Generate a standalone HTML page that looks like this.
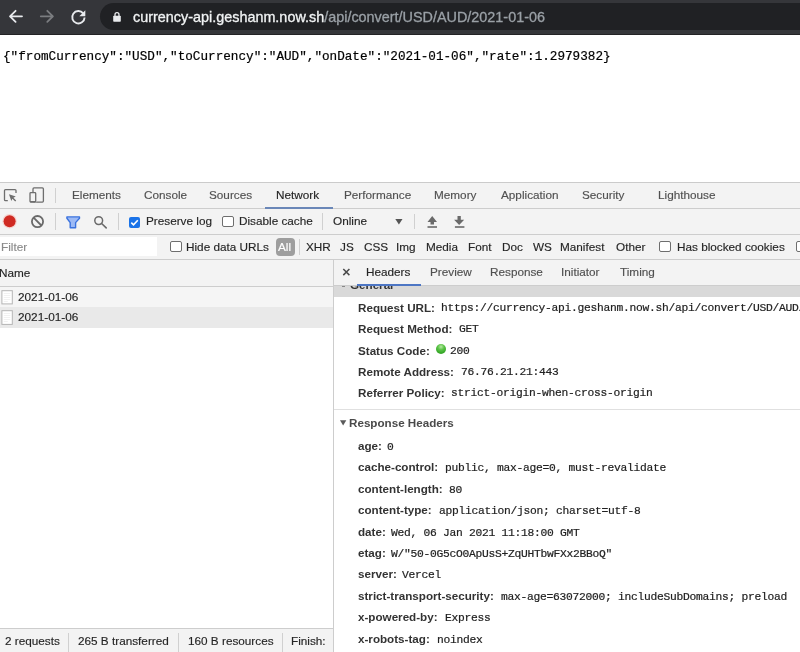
<!DOCTYPE html>
<html><head><meta charset="utf-8">
<style>
*{margin:0;padding:0;box-sizing:border-box}
html,body{width:800px;height:652px;overflow:hidden;background:#fff;font-family:"Liberation Sans",sans-serif}
.a{position:absolute;white-space:nowrap;will-change:transform}
#tb{position:absolute;left:0;top:0;width:800px;height:35px;background:#35363a;border-bottom:1px solid #232325}
#pill{position:absolute;left:100px;top:3px;width:720px;height:27px;border-radius:13.5px;background:#202124}
#url{left:133px;top:8px;font-size:14.4px;color:#f1f3f4;line-height:18px;-webkit-text-stroke:0.3px #f1f3f4}
#url span{color:#9aa0a6;-webkit-text-stroke:0.3px #9aa0a6}
#json{left:3px;top:49px;font-family:"Liberation Mono",monospace;font-size:12.66px;color:#000;line-height:16px;-webkit-text-stroke:0.2px #000}
#dt{position:absolute;left:0;top:182px;width:800px;height:470px;background:#fff;border-top:1px solid #cbcbcb}
.bar{position:absolute;left:0;width:800px;background:#f3f3f3;border-bottom:1px solid #cdcdcd}
.t{font-size:11.75px;color:#262626;line-height:14px;-webkit-text-stroke:0.15px currentColor}
.g{color:#505050}
.sep{position:absolute;width:1px;background:#d0d0d0}
.cb{position:absolute;width:12px;height:11px;border:1px solid #6e6e6e;border-radius:2px;background:#fff}
.k{font-size:11.65px;font-weight:bold;color:#333;line-height:14px}
.v{font-family:"Liberation Mono",monospace;font-size:11.3px;letter-spacing:-0.28px;font-weight:normal;color:#222;line-height:14px;-webkit-text-stroke:0.2px #222}
</style></head><body>
<div id="tb"></div>
<div id="pill"></div>
<!-- back -->
<svg class="a" style="left:0;top:0" width="100" height="35" viewBox="0 0 100 35">
 <g fill="none" stroke="#e8eaed" stroke-width="1.8" stroke-linecap="round" stroke-linejoin="round">
  <path d="M22 16.3H10.3M15.6 10.8L10 16.3l5.6 5.6"/>
 </g>
 <g fill="none" stroke="#7b7d80" stroke-width="1.8" stroke-linecap="round" stroke-linejoin="round">
  <path d="M40.8 16.3h11.8M47.3 10.8l5.6 5.5-5.6 5.6"/>
 </g>
 <path d="M83.2 13.3A6.2 6.2 0 1 0 84.6 17.5" fill="none" stroke="#e8eaed" stroke-width="1.9"/>
 <path d="M85.3 10.3v6h-6z" fill="#e8eaed"/>
</svg>
<svg class="a" style="left:112px;top:11px" width="10" height="12" viewBox="0 0 10 12">
 <path d="M3 5V3.7a2 2 0 0 1 4 0V5" fill="none" stroke="#e8eaed" stroke-width="1.3"/>
 <rect x="1.2" y="4.7" width="7.6" height="6" rx="0.8" fill="#e8eaed"/>
</svg>
<div class="a" id="url">currency-api.geshanm.now.sh<span>/api/convert/USD/AUD/2021-01-06</span></div>
<div class="a" id="json">{"fromCurrency":"USD","toCurrency":"AUD","onDate":"2021-01-06","rate":1.2979382}</div>

<div id="dt"></div>

<div class="bar" style="top:183px;height:26px"></div>
<div class="bar" style="top:209px;height:26px"></div>
<div class="bar" style="top:235px;height:25px"></div>
<div class="a" style="left:0;top:237px;width:157px;height:19px;background:#fff"></div>
<!-- left pane -->
<div class="bar" style="top:260px;width:333px;height:27px"></div>
<div class="a" style="left:0;top:287px;width:333px;height:20px;background:#f5f5f5"></div>
<div class="a" style="left:0;top:307px;width:333px;height:21px;background:#e9e9e9"></div>
<div class="a" style="left:0;top:628px;width:333px;height:24px;background:#f3f3f3;border-top:1px solid #cdcdcd"></div>
<div class="sep" style="left:333px;top:260px;height:392px;background:#cdcdcd"></div>
<!-- right pane -->
<div class="bar" style="left:334px;top:260px;width:466px;height:26px"></div>
<div class="a" style="left:357px;top:284px;width:64px;height:2px;background:#4d76c4"></div>
<div class="a" style="left:334px;top:286px;width:466px;height:11px;background:#d9d9d9;overflow:hidden"></div>
<div class="a" style="left:334px;top:409px;width:466px;height:1px;background:#e0e0e0"></div>
<div class="a" style="left:265px;top:207px;width:68px;height:2px;background:#6a87b8"></div>


<!-- tab bar -->
<div class="a t g" style="left:72px;top:188px">Elements</div>
<div class="a t g" style="left:144px;top:188px">Console</div>
<div class="a t g" style="left:209px;top:188px">Sources</div>
<div class="a t" style="left:276px;top:188px">Network</div>
<div class="a t g" style="left:344px;top:188px">Performance</div>
<div class="a t g" style="left:434px;top:188px">Memory</div>
<div class="a t g" style="left:501px;top:188px">Application</div>
<div class="a t g" style="left:582px;top:188px">Security</div>
<div class="a t g" style="left:658px;top:188px">Lighthouse</div>
<div class="sep" style="left:55px;top:188px;height:15px"></div>
<!-- row2 -->
<div class="sep" style="left:55px;top:213px;height:17px"></div>
<div class="sep" style="left:118px;top:213px;height:17px"></div>
<div class="a" style="left:129px;top:217px;width:11px;height:11px;border-radius:2px;background:#1a73e8"></div>
<svg class="a" style="left:129px;top:217px" width="11" height="11" viewBox="0 0 11 11"><path d="M2.3 5.6l2.2 2.2 4.3-4.6" fill="none" stroke="#fff" stroke-width="1.6"/></svg>
<div class="a t" style="left:146px;top:214px">Preserve log</div>
<div class="cb" style="left:222px;top:216px"></div>
<div class="a t" style="left:239px;top:214px">Disable cache</div>
<div class="sep" style="left:322px;top:213px;height:17px"></div>
<div class="a t" style="left:333px;top:214px">Online</div>
<svg class="a" style="left:395px;top:218.5px" width="8" height="6" viewBox="0 0 8 6"><path d="M0.3 0h7.2L3.9 5.6z" fill="#555"/></svg>
<div class="sep" style="left:414px;top:214px;height:15px"></div>
<!-- row3 -->
<div class="a t" style="left:1px;top:240px;color:#8a8a8a">Filter</div>
<div class="cb" style="left:170px;top:241px"></div>
<div class="a t" style="left:186px;top:240px">Hide data URLs</div>
<div class="a" style="left:276px;top:238px;width:19px;height:18px;border-radius:4px;background:#9e9e9e"></div>
<div class="a t" style="left:278px;top:240px;color:#fff">All</div>
<div class="sep" style="left:299px;top:239px;height:16px"></div>
<div class="a t" style="left:306px;top:240px">XHR</div>
<div class="a t" style="left:340px;top:240px">JS</div>
<div class="a t" style="left:364px;top:240px">CSS</div>
<div class="a t" style="left:396px;top:240px">Img</div>
<div class="a t" style="left:426px;top:240px">Media</div>
<div class="a t" style="left:468px;top:240px">Font</div>
<div class="a t" style="left:502px;top:240px">Doc</div>
<div class="a t" style="left:533px;top:240px">WS</div>
<div class="a t" style="left:560px;top:240px">Manifest</div>
<div class="a t" style="left:616px;top:240px">Other</div>
<div class="cb" style="left:659px;top:241px"></div>
<div class="a t" style="left:677px;top:240px">Has blocked cookies</div>
<div class="cb" style="left:796px;top:241px"></div>
<!-- name list -->
<div class="a t" style="left:-1px;top:266px">Name</div>
<div class="a t" style="left:18px;top:290px;font-size:11.8px">2021-01-06</div>
<div class="a t" style="left:18px;top:310px;font-size:11.8px">2021-01-06</div>
<!-- status -->
<div class="a t" style="left:5px;top:634px">2 requests</div>
<div class="sep" style="left:68px;top:633px;height:19px"></div>
<div class="a t" style="left:78px;top:634px">265 B transferred</div>
<div class="sep" style="left:178px;top:633px;height:19px"></div>
<div class="a t" style="left:188px;top:634px">160 B resources</div>
<div class="sep" style="left:282px;top:633px;height:19px"></div>
<div class="a t" style="left:291px;top:634px">Finish:</div>
<!-- details tabs -->
<svg class="a" style="left:341px;top:267px" width="10" height="10" viewBox="0 0 10 10"><path d="M2.3 2l6.1 6.1M8.4 2L2.3 8.1" stroke="#4a4a4a" stroke-width="1.5"/></svg>
<div class="a t" style="left:366px;top:265px">Headers</div>
<div class="a t g" style="left:430px;top:265px">Preview</div>
<div class="a t g" style="left:490px;top:265px">Response</div>
<div class="a t g" style="left:561px;top:265px">Initiator</div>
<div class="a t g" style="left:620px;top:265px">Timing</div>

<!-- icons -->
<svg class="a" style="left:0;top:183px" width="60" height="26" viewBox="0 183 60 26">
 <path d="M7.8 200.7H5.5a1 1 0 0 1-1-1V190.6a1 1 0 0 1 1-1h9.5a1 1 0 0 1 1 1V193" fill="none" stroke="#6e6e6e" stroke-width="1.3"/>
 <path d="M9 194.2L15.8 196.6L13.4 197.7L16.2 200.6L15.2 201.6L12.4 198.7L11.3 201.1Z" fill="#6e6e6e"/>
 <rect x="33" y="187.9" width="10.4" height="14.2" rx="1" fill="none" stroke="#6e6e6e" stroke-width="1.3"/>
 <rect x="29.3" y="192" width="7.1" height="10.8" rx="1" fill="#f3f3f3"/>
 <rect x="30" y="192.7" width="5.7" height="9.4" rx="0.8" fill="none" stroke="#6e6e6e" stroke-width="1.3"/>
 <rect x="30" y="201" width="5.7" height="1.3" fill="#6e6e6e"/>
</svg>
<svg class="a" style="left:0;top:209px" width="120" height="26" viewBox="0 209 120 26">
 <circle cx="9.6" cy="221.2" r="7.2" fill="#f5c4bf" opacity="0.7"/>
 <circle cx="9.6" cy="221.2" r="6" fill="#cf2a22"/>
 <circle cx="37.5" cy="221.6" r="5.6" fill="none" stroke="#6a6a6a" stroke-width="1.8"/>
 <path d="M33.6 217.7l7.8 7.8" stroke="#6a6a6a" stroke-width="1.8"/>
 <path d="M66.9 216.9h12.6v1.4l-3.9 4.3v5.2h-5.4v-5.2l-3.3-4.3z" fill="#9dbaf5" stroke="#3a72de" stroke-width="1.4" stroke-linejoin="round"/>
 <circle cx="98.7" cy="220.6" r="3.9" fill="none" stroke="#6a6a6a" stroke-width="1.5"/>
 <path d="M101.6 223.5l4.6 4.4" stroke="#6a6a6a" stroke-width="1.6" stroke-linecap="round"/>
</svg>
<svg class="a" style="left:420px;top:209px" width="50" height="26" viewBox="420 209 50 26">
 <path d="M432.2 216l-4.7 6h3v2.6h3.5v-2.6h3z" fill="#6a6a6a"/>
 <rect x="427.5" y="226.2" width="9.5" height="1.6" fill="#6a6a6a"/>
 <path d="M457.5 216h3.3v3.8h3.4l-5.05 5.3-5.05-5.3h3.4z" fill="#6a6a6a"/>
 <rect x="454.9" y="226.2" width="9.5" height="1.6" fill="#6a6a6a"/>
</svg>
<svg class="a" style="left:0;top:287px" width="16" height="41" viewBox="0 287 16 41">
 <rect x="1.9" y="290.7" width="10.4" height="13.2" fill="#fff" stroke="#b4b4b4" stroke-width="1"/>
 <path d="M3.8 293.5h6.5M3.8 295.5h6.5M3.8 297.5h6.5M3.8 299.5h6.5M3.8 301.5h4" stroke="#eeeeee" stroke-width="0.8"/>
 <rect x="1.9" y="310.7" width="10.4" height="13.7" fill="#fff" stroke="#b4b4b4" stroke-width="1"/>
 <path d="M3.8 313.5h6.5M3.8 315.5h6.5M3.8 317.5h6.5M3.8 319.5h6.5M3.8 321.5h4" stroke="#eeeeee" stroke-width="0.8"/>
</svg>
<div class="a" style="left:334px;top:286px;width:466px;height:11px;overflow:hidden"><div class="k" style="position:absolute;left:16px;top:-8.5px">General</div><div style="position:absolute;left:8px;top:0;width:2.5px;height:1px;background:#888"></div></div>
<div class="a k" style="left:358px;top:301px">Request URL:</div>
<div class="a v" style="left:440.55px;top:301px">https://currency-api.geshanm.now.sh/api/convert/USD/AUD/2021-01-06</div>
<div class="a k" style="left:358px;top:322px">Request Method:</div>
<div class="a v" style="left:459.30px;top:322px">GET</div>
<div class="a k" style="left:358px;top:344px">Status Code:</div>
<div class="a v" style="left:450.30px;top:344px">200</div>
<div class="a k" style="left:358px;top:365px">Remote Address:</div>
<div class="a v" style="left:460.55px;top:365px">76.76.21.21:443</div>
<div class="a k" style="left:358px;top:386px">Referrer Policy:</div>
<div class="a v" style="left:450.55px;top:386px">strict-origin-when-cross-origin</div>
<div class="a" style="left:436px;top:344px;width:10px;height:10px;border-radius:5px;background:radial-gradient(circle at 50% 28%,#b8e8a4 0,#5cc448 35%,#36a828 70%,#2e9422 100%)"></div>
<svg class="a" style="left:340px;top:420px" width="7" height="6" viewBox="0 0 7 6"><path d="M0 0.3h6.3L3.15 5.6z" fill="#5a5a5a"/></svg>
<div class="a k" style="left:349px;top:416px;color:#4a4a4a">Response Headers</div>
<div class="a k" style="left:358px;top:439px">age:</div>
<div class="a v" style="left:387.30px;top:440px">0</div>
<div class="a k" style="left:358px;top:460px">cache-control:</div>
<div class="a v" style="left:445.05px;top:461px">public, max-age=0, must-revalidate</div>
<div class="a k" style="left:358px;top:482px">content-length:</div>
<div class="a v" style="left:449.30px;top:483px">80</div>
<div class="a k" style="left:358px;top:503px">content-type:</div>
<div class="a v" style="left:438.55px;top:504px">application/json; charset=utf-8</div>
<div class="a k" style="left:358px;top:525px">date:</div>
<div class="a v" style="left:391.30px;top:526px">Wed, 06 Jan 2021 11:18:00 GMT</div>
<div class="a k" style="left:358px;top:546px">etag:</div>
<div class="a v" style="left:391.30px;top:547px">W/&quot;50-0G5cO0ApUsS+ZqUHTbwFXx2BBoQ&quot;</div>
<div class="a k" style="left:358px;top:567px">server:</div>
<div class="a v" style="left:402.30px;top:568px">Vercel</div>
<div class="a k" style="left:358px;top:589px">strict-transport-security:</div>
<div class="a v" style="left:501.05px;top:590px">max-age=63072000; includeSubDomains; preload</div>
<div class="a k" style="left:358px;top:610px">x-powered-by:</div>
<div class="a v" style="left:445.05px;top:611px">Express</div>
<div class="a k" style="left:358px;top:632px">x-robots-tag:</div>
<div class="a v" style="left:437.30px;top:633px">noindex</div>
</body></html>
